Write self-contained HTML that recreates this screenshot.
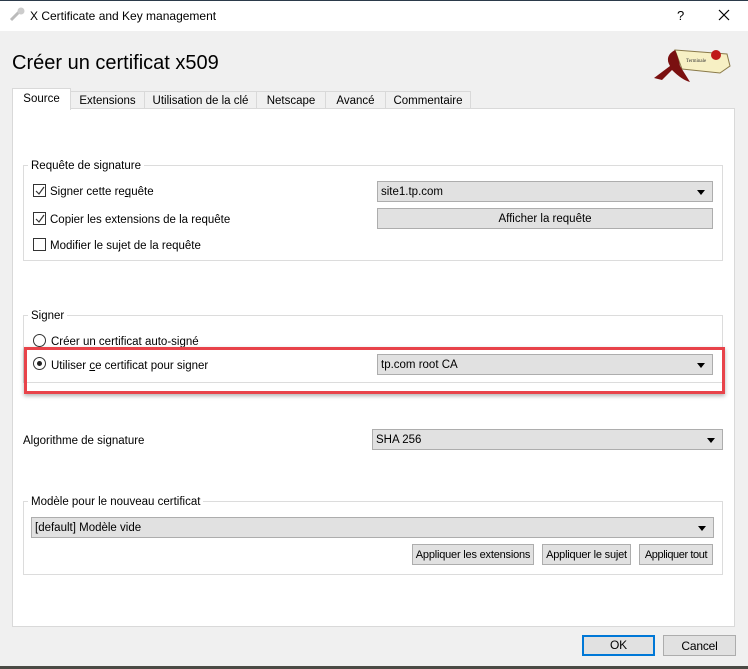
<!DOCTYPE html>
<html><head><meta charset="utf-8"><style>
*{margin:0;padding:0;box-sizing:border-box}
body{width:748px;height:669px;background:#f0f0f0;font-family:"Liberation Sans",sans-serif;font-size:12px;color:#000;position:relative;overflow:hidden}
.a{position:absolute;white-space:nowrap}
.tb{left:0;top:0;width:748px;height:31px;background:#fff;border-top:1px solid #2b3a4a}
.tab{position:absolute;top:91px;height:18px;border:1px solid #d9d9d9;border-bottom:none;background:#f0f0f0;text-align:center;line-height:19px;font-size:11.5px;white-space:nowrap}
.panel{left:12px;top:108px;width:723px;height:519px;background:#fff;border:1px solid #d9d9d9}
.grp{position:absolute;border:1px solid #dcdcdc}
.gl{position:absolute;background:#fff;padding:0 3px;font-size:11.5px;line-height:13px;white-space:nowrap}
.cb{position:absolute;width:13px;height:13px;border:1px solid #333;background:#fff}
.rd{position:absolute;width:13px;height:13px;border:1px solid #333;border-radius:50%;background:#fff}
.combo{position:absolute;height:21px;background:#e1e1e1;border:1px solid #adadad;padding-left:3px;line-height:21px;font-size:11.5px;white-space:nowrap}
.combo:after{content:"";position:absolute;right:7px;top:8px;border-left:4px solid transparent;border-right:4px solid transparent;border-top:5px solid #000}
.btn{position:absolute;height:21px;background:#e1e1e1;border:1px solid #adadad;text-align:center;line-height:21px;font-size:11px;white-space:nowrap;letter-spacing:-0.2px}
.t{position:absolute;font-size:11.5px;line-height:13px;white-space:nowrap;margin-top:2px}
</style></head><body>
<div class="a tb"></div>
<svg class="a" style="left:8px;top:7px" width="18" height="16"><path d="M3 13 L11 5" stroke="#bbb" stroke-width="3"/><circle cx="13" cy="4" r="3.5" fill="#ccc"/></svg>
<div class="a" style="left:30px;top:9px;font-size:12px">X Certificate and Key management</div>
<div class="a" style="left:677px;top:8px;font-size:13px">?</div>
<svg class="a" style="left:718px;top:9px" width="12" height="12"><path d="M1 1L11 11M11 1L1 11" stroke="#000" stroke-width="1.2"/></svg>
<div class="a" style="left:12px;top:52px;font-size:20px">Créer un certificat x509</div>
<svg class="a" style="left:642px;top:44px" width="90" height="40"><path d="M33 6 L85 10 L88 22 L78 29 L40 25 Z" fill="#f7f0c4" stroke="#8a7a4a"/><circle cx="74" cy="11" r="5" fill="#c01818"/><path d="M33 6 Q22 12 28 22 L12 34 L20 36 L30 26 Q40 36 48 38 L38 22 Q36 12 33 6Z" fill="#7a1010"/><text x="44" y="18" font-size="5" font-family="Liberation Serif" fill="#333">Terminale</text></svg>
<div class="tab" style="left:70px;width:75px">Extensions</div>
<div class="tab" style="left:144px;width:113px">Utilisation de la clé</div>
<div class="tab" style="left:256px;width:70px">Netscape</div>
<div class="tab" style="left:325px;width:61px">Avancé</div>
<div class="tab" style="left:385px;width:86px">Commentaire</div>
<div class="a panel"></div>
<div class="tab" style="left:12px;top:88px;width:59px;height:22px;background:#fff;line-height:21px;z-index:2">Source</div>

<div class="grp" style="left:23px;top:165px;width:700px;height:96px"></div>
<div class="gl" style="left:28px;top:160px">Requête de signature</div>
<div class="cb" style="left:33px;top:184px"></div><svg class="a" style="left:34px;top:185px" width="12" height="12"><path d="M2 6L5 9L10 2" stroke="#333" fill="none" stroke-width="1.2"/></svg>
<div class="t" style="left:50px;top:184px">Signer cette re<u>q</u>uête</div>
<div class="cb" style="left:33px;top:212px"></div><svg class="a" style="left:34px;top:213px" width="12" height="12"><path d="M2 6L5 9L10 2" stroke="#333" fill="none" stroke-width="1.2"/></svg>
<div class="t" style="left:50px;top:212px">Copier les extensions de la requête</div>
<div class="cb" style="left:33px;top:238px"></div>
<div class="t" style="left:50px;top:238px">Modifier le sujet de la requête</div>
<div class="combo" style="left:377px;top:181px;width:336px">site1.tp.com</div>
<div class="btn" style="left:377px;top:208px;width:336px;font-size:11.5px;letter-spacing:0">Afficher la requête</div>

<div class="grp" style="left:23px;top:315px;width:700px;height:68px"></div>
<div class="gl" style="left:28px;top:310px">Signer</div>
<div class="rd" style="left:33px;top:334px"></div>
<div class="t" style="left:51px;top:334px">Créer un certificat auto-si<u>g</u>né</div>
<div class="rd" style="left:33px;top:357px"></div><div class="a" style="left:37px;top:361px;width:5px;height:5px;border-radius:50%;background:#222"></div>
<div class="t" style="left:51px;top:358px">Utiliser <u>c</u>e certificat pour signer</div>
<div class="combo" style="left:377px;top:354px;width:336px">tp.com root CA</div>
<div class="a" style="left:24px;top:347px;width:701px;height:47px;border:3px solid #e8434a;box-shadow:0 2px 4px rgba(0,0,0,.3)"></div>

<div class="t" style="left:23px;top:433px">Algorithme de signature</div>
<div class="combo" style="left:372px;top:429px;width:351px">SHA 256</div>

<div class="grp" style="left:23px;top:501px;width:700px;height:74px"></div>
<div class="gl" style="left:28px;top:496px">Modèle pour le nouveau certificat</div>
<div class="combo" style="left:31px;top:517px;width:683px">[default] Modèle vide</div>
<div class="btn" style="left:412px;top:544px;width:122px">Appliquer les extensions</div>
<div class="btn" style="left:542px;top:544px;width:89px">Appliquer le sujet</div>
<div class="btn" style="left:639px;top:544px;width:74px;letter-spacing:-0.4px">Appliquer tout</div>

<div class="btn" style="left:582px;top:635px;width:73px;border:2px solid #0078d7;line-height:17px;font-size:12px">OK</div>
<div class="btn" style="left:663px;top:635px;width:73px;font-size:12px">Cancel</div>
<div class="a" style="left:0;top:666px;width:748px;height:3px;background:#4a4a44"></div>
</body></html>
